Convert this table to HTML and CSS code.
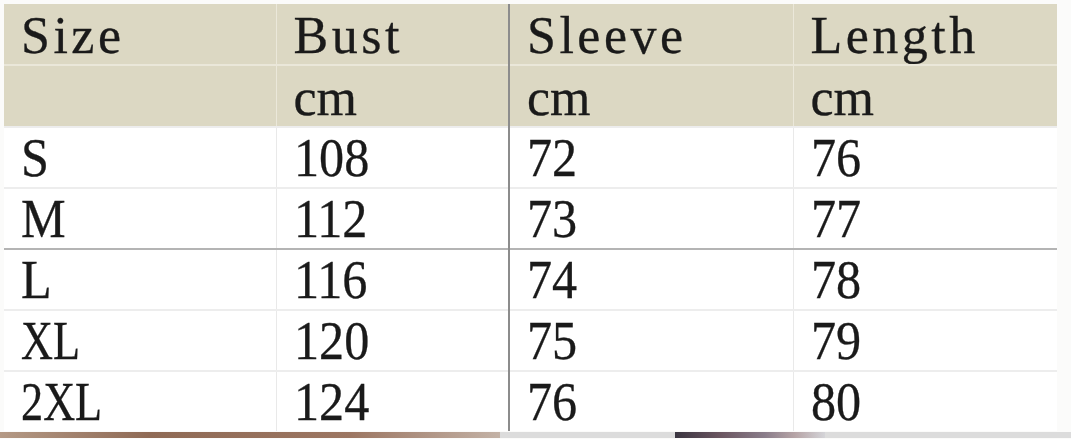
FILE: index.html
```html
<!DOCTYPE html>
<html>
<head>
<meta charset="utf-8">
<link rel="stylesheet" href="styles.css">
</head>
<body>
<table class="chart">
  <colgroup>
    <col class="c1"><col class="c2"><col class="c3"><col class="c4">
  </colgroup>
  <tr class="head r1"><td>Size</td><td>Bust</td><td class="split">Sleeve</td><td>Length</td></tr>
  <tr class="head r2"><td></td><td>cm</td><td class="split">cm</td><td>cm</td></tr>
  <tr class="row"><td><span>S</span></td><td><span>108</span></td><td class="split"><span>72</span></td><td><span>76</span></td></tr>
  <tr class="row"><td><span>M</span></td><td><span>112</span></td><td class="split"><span>73</span></td><td><span>77</span></td></tr>
  <tr class="row rule"><td><span>L</span></td><td><span>116</span></td><td class="split"><span>74</span></td><td><span>78</span></td></tr>
  <tr class="row"><td><span class="lbl">XL</span></td><td><span>120</span></td><td class="split"><span>75</span></td><td><span>79</span></td></tr>
  <tr class="row"><td><span class="lbl">2XL</span></td><td><span>124</span></td><td class="split"><span>76</span></td><td><span>80</span></td></tr>
</table>
<div class="strip">
  <div class="strip-brown"></div>
  <div class="strip-gray">
    <div class="strip-photo"></div>
  </div>
</div>
</body>
</html>
```
FILE: styles.css
```css
html, body {
  margin: 0;
  padding: 0;
  background: #fbfbfa;
}
body {
  padding: 4px 14px 0 4px;
  width: 1053px;
  font-family: "Liberation Serif", "Times New Roman", serif;
  color: #1a1a1a;
  -webkit-text-stroke: 0.3px #1a1a1a;
}
.chart {
  border-collapse: collapse;
  table-layout: fixed;
  width: 1053px;
}
.c1 { width: 272px; }
.c2 { width: 233px; }
.c3 { width: 284px; }
.c4 { width: 264px; }
.chart td {
  padding: 0 0 0 17px;
  vertical-align: middle;
  white-space: nowrap;
  overflow: hidden;
  border-left: 1px solid #e9e9e9;
  border-top: 2px solid #ededed;
}
.chart td:first-child {
  border-left: 0;
}
.head td {
  background: #dcd8c3;
  font-size: 52px;
  letter-spacing: 3.5px;
  line-height: 1;
  border-left-color: #ebe8da;
  border-top-color: #eae7d9;
}
.head.r1 td {
  height: 57px;
  padding-top: 3px;
  border-top: 0;
}
.head.r2 td {
  height: 56px;
  padding-top: 4px;
  letter-spacing: 0;
}
.row td {
  background: #ffffff;
  height: 59px;
  font-size: 54px;
  line-height: 1;
}
.row td span {
  display: inline-block;
  transform: scaleX(0.93);
  transform-origin: left center;
}
.row td span.lbl {
  transform: scaleX(0.82);
}
.chart td.split {
  border-left: 2px solid #8c8c8c;
}
.row.rule td {
  border-top: 2px solid #b4b4b4;
}
.strip {
  display: flex;
  margin: 1px -14px 0 -4px;
  height: 6px;
}
.strip-brown {
  width: 500px;
  background: linear-gradient(90deg, #b49985 0%, #8f6a55 30%, #9c7662 70%, #c3b2a6 100%);
}
.strip-gray {
  flex: 1;
  background: #dcdcdc;
  display: flex;
  padding-left: 175px;
}
.strip-photo {
  width: 150px;
  background: linear-gradient(90deg, #3a3540, #6a5560 30%, #8a7d8a 60%, #b6a4a6 80%, #d4d4d8);
}
```
